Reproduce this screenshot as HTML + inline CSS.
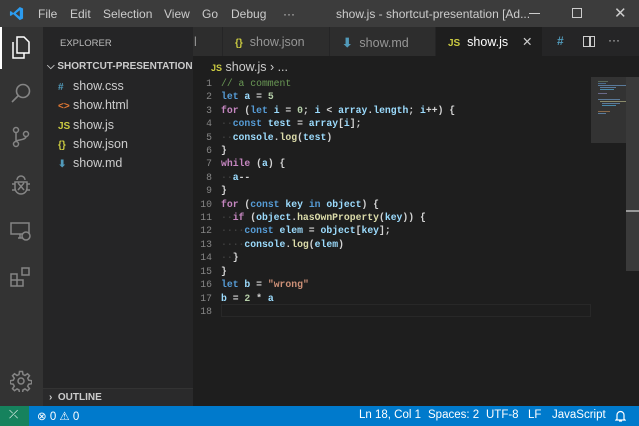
<!DOCTYPE html>
<html><head><style>
*{margin:0;padding:0;box-sizing:border-box}
body{width:639px;height:426px;overflow:hidden;background:#1e1e1e;font-family:"Liberation Sans",sans-serif;position:relative}
.abs{position:absolute}
#title{left:0;top:0;width:639px;height:27px;background:#3c3c3c;color:#ccc;font-size:12px}
#title span{position:absolute;top:7px}
#act{left:0;top:27px;width:43px;height:379px;background:#333}
#side{left:43px;top:27px;width:150px;height:379px;background:#252526}
#tabs{left:193px;top:27px;width:446px;height:29px;background:#252526}
.tab{position:absolute;top:0;height:29px;background:#2d2d2d;color:#969696;font-size:12.5px;padding-top:8px;border-right:1px solid #252526}
#status{left:0;top:406px;width:639px;height:20px;background:#007acc;color:#fff;font-size:11.5px}
#status span{position:absolute;top:3px}
.code{position:absolute;left:193px;top:77px;font-family:"Liberation Mono",monospace;font-size:9.75px;line-height:13.4px;color:#d4d4d4;white-space:pre;font-weight:bold}
.ln{position:absolute;left:193px;width:19px;text-align:right;color:#858585;font-weight:normal}
.k{color:#569cd6}.v{color:#9cdcfe}.f{color:#dcdcaa}.s{color:#ce9178}.c{color:#6a9955;font-weight:normal}.n{color:#b5cea8}.p{color:#c586c0}
.file{position:absolute;left:58px;font-size:12.5px;color:#ccc}
.file i{font-style:normal;font-weight:bold;font-size:10px;margin-right:5px;display:inline-block;width:10px}
.mm{position:absolute;height:1px}
</style></head><body>
<div id="title" class="abs">
<svg class="abs" style="left:9px;top:6px" width="15" height="15" viewBox="0 0 16 16"><path d="M11.5 1 L15 2.7 V13.3 L11.5 15 L4.5 8.6 L1.8 10.7 L1 10 V6 L1.8 5.3 L4.5 7.4 Z M11.5 4.5 L7.2 8 L11.5 11.5 Z" fill="#2c9cf0"/></svg>
<span style="left:38px">File</span><span style="left:70px">Edit</span><span style="left:103px">Selection</span><span style="left:164px">View</span><span style="left:202px">Go</span><span style="left:231px">Debug</span><span style="left:283px">···</span>
<span style="left:336px">show.js - shortcut-presentation [Ad...</span>
<div class="abs" style="left:529px;top:13px;width:11px;height:1px;background:#ccc"></div>
<div class="abs" style="left:572px;top:8px;width:10px;height:10px;border:1px solid #ccc"></div>
<span style="left:614px;top:4px;font-size:15px">✕</span>
</div>
<div id="act" class="abs">
<div class="abs" style="left:0;top:0;width:2px;height:42px;background:#fff"></div>
<svg class="abs" style="left:10px;top:9px" width="22" height="24" viewBox="0 0 22 24" fill="none" stroke="#fff" stroke-width="1.5"><path d="M7 1h7l5 5v11H7z M3 6v16h11v-5"/></svg>
<svg class="abs" style="left:10px;top:55px" width="22" height="22" viewBox="0 0 22 22" fill="none" stroke="#858585" stroke-width="1.6"><circle cx="13" cy="9" r="6.5"/><path d="M8 14l-6 6"/></svg>
<svg class="abs" style="left:11px;top:99px" width="20" height="22" viewBox="0 0 20 22" fill="none" stroke="#858585" stroke-width="1.5"><circle cx="5" cy="4" r="2.5"/><circle cx="5" cy="18" r="2.5"/><circle cx="15" cy="8" r="2.5"/><path d="M5 6.5v9M15 10.5c0 4-10 3-10 5"/></svg>
<svg class="abs" style="left:10px;top:147px" width="22" height="22" viewBox="0 0 22 22" fill="none" stroke="#858585" stroke-width="1.5"><path d="M7 6a4 4 0 0 1 8 0M5 8h12v6a6 6 0 0 1-12 0z M2 10h3M17 10h3M2 16h3M17 16h3M8 9l6 7M14 9l-6 7"/></svg>
<svg class="abs" style="left:10px;top:193px" width="22" height="22" viewBox="0 0 22 22" fill="none" stroke="#858585" stroke-width="1.5"><path d="M1 3h18v11H1z M8 18h4M10 14v4"/><circle cx="16" cy="16" r="4" fill="#333"/></svg>
<svg class="abs" style="left:10px;top:239px" width="22" height="22" viewBox="0 0 22 22" fill="none" stroke="#858585" stroke-width="1.5"><path d="M1 8h6v6H1z M1 14h6v6H1z M7 14h6v6H7z M12 2h7v7h-7z"/></svg>
<svg class="abs" style="left:10px;top:343px" width="22" height="22" viewBox="0 0 22 22" fill="none" stroke="#858585" stroke-width="1.5"><circle cx="11" cy="11" r="3"/><path d="M9.5 1.5h3l.5 3 2 1 2.5-1.8 2 2-1.8 2.5 1 2 3 .5v3l-3 .5-1 2 1.8 2.5-2 2-2.5-1.8-2 1-.5 3h-3l-.5-3-2-1-2.5 1.8-2-2 1.8-2.5-1-2-3-.5v-3l3-.5 1-2-1.8-2.5 2-2 2.5 1.8 2-1z"/></svg>
</div>
<div id="side" class="abs">
<div class="abs" style="left:17px;top:11px;font-size:9.5px;color:#bbb">EXPLORER</div>
<div class="abs" style="left:0;top:31px;width:150px;height:18px;font-size:10px;font-weight:bold;color:#ccc;padding:3px 0 0 4px">⌵ SHORTCUT-PRESENTATION</div>
<div class="abs" style="left:0;top:361px;width:150px;height:18px;background:#2a2a2b;border-top:1px solid #333;font-size:10px;font-weight:bold;color:#ccc;padding:3px 0 0 6px">›&nbsp; OUTLINE</div>
</div>
<div class="file" style="top:79px"><i style="color:#519aba">#</i>show.css</div>
<div class="file" style="top:98px"><i style="color:#e37933">&lt;&gt;</i>show.html</div>
<div class="file" style="top:118px"><i style="color:#cbcb41">JS</i>show.js</div>
<div class="file" style="top:137px"><i style="color:#cbcb41">{}</i>show.json</div>
<div class="file" style="top:156px"><i style="color:#519aba">⬇</i>show.md</div>
<div id="tabs" class="abs">
<div class="tab" style="left:0;width:30px;padding-left:1px">l</div>
<div class="tab" style="left:30px;width:107px;padding-left:12px"><b style="color:#cbcb41;font-size:10px">{}</b>&nbsp; show.json</div>
<div class="tab" style="left:137px;width:106px;padding-left:12px"><b style="color:#519aba">⬇</b>&nbsp; show.md</div>
<div class="tab" style="left:243px;width:107px;padding-left:12px;background:#1e1e1e;color:#fff"><b style="color:#cbcb41;font-size:10px">JS</b>&nbsp; show.js<span style="position:absolute;left:86px;top:7px;color:#ccc">✕</span></div>
<span class="abs" style="left:364px;top:7px;color:#519aba;font-size:12px;font-weight:bold">#</span>
<div class="abs" style="left:390px;top:9px;width:12px;height:11px;border:1.5px solid #ccc"></div><div class="abs" style="left:396px;top:9px;width:1.5px;height:11px;background:#ccc"></div>
<span class="abs" style="left:415px;top:6px;color:#ccc;font-size:12px">···</span>
</div>
<div class="abs" style="left:211px;top:60px;font-size:12.5px;color:#ccc"><b style="color:#cbcb41;font-size:9px">JS</b> show.js › ...</div>
<div class="abs" style="left:221px;top:304px;width:370px;height:13px;border:1px solid #282828"></div>
<div class="abs" style="left:591px;top:77px;width:35px;height:66px;background:#333"></div>
<div class="mm" style="left:598px;top:81px;width:10px;background:#5a6a5a"></div>
<div class="mm" style="left:598px;top:83px;width:8px;background:#4a6a8a"></div>
<div class="mm" style="left:598px;top:85px;width:28px;background:#5a7a9a"></div>
<div class="mm" style="left:600px;top:87px;width:16px;background:#5a7a9a"></div>
<div class="mm" style="left:600px;top:89px;width:14px;background:#4a8aaa"></div>
<div class="mm" style="left:598px;top:93px;width:9px;background:#6a6a8a"></div>
<div class="mm" style="left:598px;top:99px;width:22px;background:#5a7a9a"></div>
<div class="mm" style="left:600px;top:101px;width:26px;background:#8a8a6a"></div>
<div class="mm" style="left:602px;top:103px;width:18px;background:#5a7a9a"></div>
<div class="mm" style="left:602px;top:105px;width:14px;background:#4a8aaa"></div>
<div class="mm" style="left:598px;top:111px;width:12px;background:#8a6a4a"></div>
<div class="mm" style="left:598px;top:113px;width:8px;background:#5a7a9a"></div>
<div class="abs" style="left:626px;top:77px;width:13px;height:194px;background:#3a3a3a"></div>
<div class="abs" style="left:626px;top:210px;width:13px;height:2px;background:#999"></div>
<div class="ln code" style="left:193px">1
2
3
4
5
6
7
8
9
10
11
12
13
14
15
16
17
18</div>
<div class="code" style="left:221px"><span class="c">// a comment</span>
<span class="k">let</span> <span class="v">a</span> = <span class="n">5</span>
<span class="p">for</span> (<span class="k">let</span> <span class="v">i</span> = <span class="n">0</span>; <span class="v">i</span> &lt; <span class="v">array</span>.<span class="v">length</span>; <span class="v">i</span>++) {
<span style="color:#404040">··</span><span class="k">const</span> <span class="v">test</span> = <span class="v">array</span>[<span class="v">i</span>];
<span style="color:#404040">··</span><span class="v">console</span>.<span class="f">log</span>(<span class="v">test</span>)
}
<span class="p">while</span> (<span class="v">a</span>) {
<span style="color:#404040">··</span><span class="v">a</span>--
}
<span class="p">for</span> (<span class="k">const</span> <span class="v">key</span> <span class="k">in</span> <span class="v">object</span>) {
<span style="color:#404040">··</span><span class="p">if</span> (<span class="v">object</span>.<span class="f">hasOwnProperty</span>(<span class="v">key</span>)) {
<span style="color:#404040">····</span><span class="k">const</span> <span class="v">elem</span> = <span class="v">object</span>[<span class="v">key</span>];
<span style="color:#404040">····</span><span class="v">console</span>.<span class="f">log</span>(<span class="v">elem</span>)
<span style="color:#404040">··</span>}
}
<span class="k">let</span> <span class="v">b</span> = <span class="s">"wrong"</span>
<span class="v">b</span> = <span class="n">2</span> * <span class="v">a</span>
</div>
<div id="status" class="abs">
<div class="abs" style="left:0;top:0;width:29px;height:20px;background:#16825d"></div>
<span style="left:9px">⤫</span>
<span style="left:37px">⊗ 0 ⚠ 0</span>
<span style="left:359px">Ln 18, Col 1</span><span style="left:428px">Spaces: 2</span><span style="left:486px">UTF-8</span><span style="left:528px">LF</span><span style="left:552px">JavaScript</span>
<svg class="abs" style="left:615px;top:4px" width="11" height="12" viewBox="0 0 11 12" fill="none" stroke="#fff" stroke-width="1.2"><path d="M2 9V5a3.5 3.5 0 0 1 7 0v4l1 1H1z M4 11h3"/></svg>
</div>
</body></html>
